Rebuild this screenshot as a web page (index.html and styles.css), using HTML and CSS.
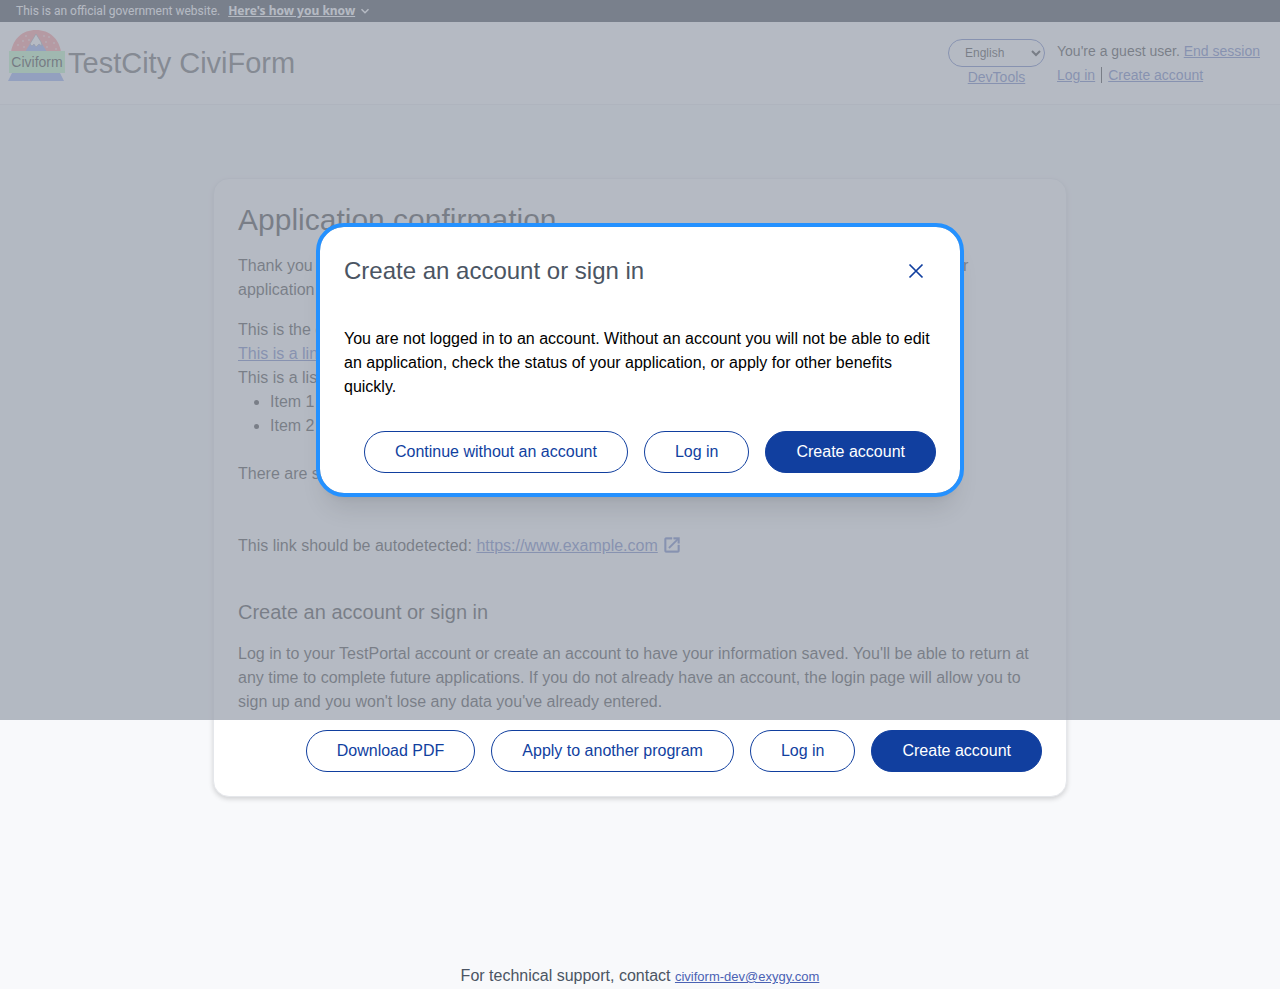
FILE: index.html
```html
<!DOCTYPE html>
<html lang="en">
<head>
<meta charset="utf-8">
<meta name="viewport" content="width=device-width, initial-scale=1">
<title>Application confirmation</title>
<link rel="stylesheet" href="styles.css">
</head>
<body>
<div class="banner">
  <span>This is an official government website.</span>
  <button class="banner-toggle" type="button"><span class="banner-label">Here's how you know</span>
    <svg class="chevron" viewBox="0 0 10 10" aria-hidden="true"><path d="M1.5 3.2 5 6.7 8.5 3.2"/></svg>
  </button>
</div>
<header class="header">
  <a class="brand" href="#">
    <svg class="logo" viewBox="0 0 60 54" aria-hidden="true">
      <path fill="#ff8080" d="M3 23C5 10 14 1 28 1s23 9 25 22z"/>
      <g fill="#fff"><circle cx="10" cy="16" r=".7"/><circle cx="15" cy="12" r=".7"/><circle cx="18" cy="7" r=".7"/><circle cx="21" cy="11" r=".7"/><circle cx="16" cy="18" r=".7"/><circle cx="36" cy="7" r=".7"/><circle cx="41" cy="8" r=".7"/><circle cx="38" cy="13" r=".7"/><circle cx="46" cy="14" r=".7"/><circle cx="39" cy="18" r=".7"/><circle cx="48" cy="20" r=".7"/></g>
      <path fill="#7896f0" d="M17 23 28 5l11 18z"/>
      <path fill="#fff" stroke="#777" stroke-width=".5" d="m28 5-6 10 2 2 2-2 2 3 3-3 3 2-1-4z"/>
      <path fill="#7896f0" d="M4 44h48l4 8H0z"/>
      <path fill="#acf8b4" d="M1 22h56v22H1z"/>
      <text class="logo-text" x="29" y="38" text-anchor="middle">Civiform</text>
    </svg>
    <span class="brand-name">TestCity CiviForm</span>
  </a>
  <div class="header-tools">
    <div class="language">
      <select class="language-select" aria-label="Language"><option>English</option></select>
      <a class="link" href="#">DevTools</a>
    </div>
    <div class="account">
      <div>You're a guest user. <a class="link" href="#">End session</a></div>
      <div class="account-links"><a class="link" href="#">Log in</a><span class="divider"></span><a class="link" href="#">Create account</a></div>
    </div>
  </div>
</header>
<main class="main">
  <section class="card">
    <h1 class="title">Application confirmation</h1>
    <p class="text">Thank you for submitting your application to the Comprehensive Sample Program. We've received your application and your confirmation number is below.</p>
    <div class="message">
      <p class="text">This is the custom confirmation message with markdown</p>
      <p class="text"><a class="link" href="#">This is a link</a></p>
      <p class="text">This is a list:</p>
      <ul class="list"><li>Item 1</li><li>Item 2</li></ul>
      <p class="text spaced">There are some empty lines below this line</p>
      <p class="text autolink">This link should be autodetected: <a class="link" href="#">https://www.example.com</a>
        <svg class="external" viewBox="0 0 24 24" aria-hidden="true"><path d="M19 19H5V5h7V3H5a2 2 0 0 0-2 2v14a2 2 0 0 0 2 2h14a2 2 0 0 0 2-2v-7h-2v7zM14 3v2h3.600l-9.800 9.800 1.400 1.400L19 6.400V10h2V3h-7z"/></svg></p>
    </div>
    <h2 class="subtitle">Create an account or sign in</h2>
    <p class="text">Log in to your TestPortal account or create an account to have your information saved. You'll be able to return at any time to complete future applications. If you do not already have an account, the login page will allow you to sign up and you won't lose any data you've already entered.</p>
    <div class="actions">
      <button class="button" type="button">Download PDF</button>
      <button class="button" type="button">Apply to another program</button>
      <button class="button" type="button">Log in</button>
      <button class="button primary" type="button">Create account</button>
    </div>
  </section>
</main>
<footer class="footer">For technical support, contact <a class="link support" href="#">civiform-dev@exygy.com</a></footer>
<div class="overlay">
  <div class="modal" role="dialog" aria-modal="true" aria-labelledby="modal-title">
    <div class="modal-header">
      <h2 class="modal-title" id="modal-title">Create an account or sign in</h2>
      <button class="close" type="button" aria-label="Close"><svg viewBox="0 0 16 16" aria-hidden="true"><path d="m1.500 1.500 13 13m0-13-13 13"/></svg></button>
    </div>
    <p class="modal-text">You are not logged in to an account. Without an account you will not be able to edit an application, check the status of your application, or apply for other benefits quickly.</p>
    <div class="actions modal-actions">
      <button class="button" type="button">Continue without an account</button>
      <button class="button" type="button">Log in</button>
      <button class="button primary" type="button">Create account</button>
    </div>
  </div>
</div>
</body>
</html>
```
FILE: styles.css
```css
* { box-sizing: border-box; }
body {
  margin: 0;
  min-height: 100vh;
  display: flex;
  flex-direction: column;
  position: relative;
  background: #f8f9fb;
  color: #111;
  font: 16px/24px "Liberation Sans", Arial, sans-serif;
}
h1, h2, p, ul { margin: 0; font-weight: 400; }
button, select { font: inherit; color: inherit; }
.link { color: #4a62b4; text-decoration: underline; }

.banner {
  display: flex;
  align-items: center;
  gap: 8px;
  height: 22px;
  padding: 0 16px;
  background: #111827;
  color: #fff;
  font: 12px/20px Roboto, sans-serif;
}
.banner-toggle {
  display: flex;
  align-items: center;
  gap: 5px;
  padding: 0;
  border: 0;
  background: none;
  font-family: "Noto Sans", sans-serif;
  font-weight: 700;
}
.banner-label { text-decoration: underline; }
.chevron { width: 10px; height: 10px; fill: none; stroke: #fff; stroke-width: 1.5; }

.header {
  display: flex;
  justify-content: space-between;
  align-items: flex-start;
  height: 83px;
  padding: 7px 20px 0 8px;
  background: #fff;
  border-bottom: 1px solid #e5e7eb;
}
.brand { display: flex; color: #404040; text-decoration: none; }
.logo { width: 60px; height: 54px; }
.logo-text { font: 14px "Liberation Sans", Arial, sans-serif; fill: #000; }
.brand-name { padding-top: 16px; font-size: 29px; line-height: 36px; }
.header-tools { display: flex; gap: 12px; padding-top: 10px; font-size: 14px; }
.language { display: flex; flex-direction: column; align-items: center; line-height: 20px; }
.language-select {
  width: 97px;
  height: 28px;
  padding: 0 0 0 12px;
  border: 1px solid #4a62b4;
  border-radius: 14px;
  background: #fff;
  font-size: 12px;
}
.account-links { display: flex; align-items: center; gap: 6px; }
.divider { width: 1px; height: 16px; background: #111; }

.main { flex: 1; padding: 73px 16px 0; }
.card {
  max-width: 854px;
  margin: 0 auto;
  padding: 23px 24px 24px;
  background: #fff;
  border: 1px solid #e5e7eb;
  border-radius: 16px;
  box-shadow: 0 2px 5px rgba(0, 0, 0, .16);
}
.title { margin-bottom: 16px; font-size: 30px; line-height: 36px; }
.message { margin-top: 16px; }
.list { padding-left: 32px; }
.spaced { margin-top: 24px; }
.autolink { margin-top: 48px; }
.external { width: 20px; height: 20px; vertical-align: -4px; fill: #4a62b4; stroke: #4a62b4; stroke-width: .5; }
.subtitle { margin: 42px 0 18px; font-size: 20px; line-height: 24px; }
.actions { display: flex; flex-wrap: wrap; justify-content: flex-end; gap: 16px; margin-top: 16px; }
.button {
  padding: 8px 30px;
  border: 1px solid #113f9f;
  border-radius: 21px;
  background: #fff;
  color: #113f9f;
}
.button.primary { background: #113f9f; color: #fff; }
.footer { color: #4b5563; text-align: center; }
.support { font-size: 13px; }

.overlay {
  position: absolute;
  top: 0;
  left: 0;
  right: 0;
  height: 720px;
  display: flex;
  align-items: center;
  justify-content: center;
  background: rgba(156, 163, 175, .75);
}
.modal {
  width: 50%;
  min-width: 640px;
  padding: 24px 24px 20px;
  background: #fff;
  border-radius: 24px;
  outline: 4px solid #2491ff;
  box-shadow: 0 20px 25px -5px rgba(0, 0, 0, .1), 0 8px 10px -6px rgba(0, 0, 0, .1);
  color: #000;
}
.modal-header { display: flex; justify-content: space-between; align-items: center; }
.modal-title { color: #4b5563; font-size: 24px; line-height: 32px; }
.close {
  display: flex;
  align-items: center;
  justify-content: center;
  width: 40px;
  height: 40px;
  padding: 0;
  border: 0;
  background: none;
}
.close svg { width: 16px; height: 16px; fill: none; stroke: #113f9f; stroke-width: 1.7; }
.modal-text { margin-top: 36px; }
.modal-actions { margin-top: 32px; }
```
